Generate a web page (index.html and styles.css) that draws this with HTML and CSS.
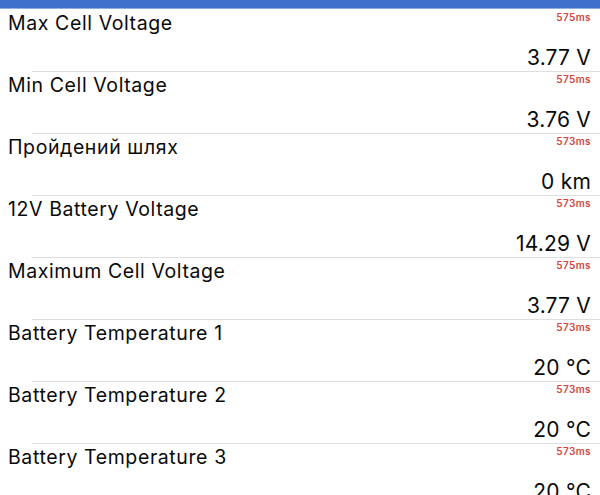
FILE: index.html
```html
<!DOCTYPE html>
<html lang="uk">
<head>
    <meta charset="UTF-8">
    <meta name="viewport" content="width=device-width, initial-scale=1.0">
    <title>Показники батареї</title>
    <link rel="stylesheet" href="styles.css">
</head>
<body>

    <!-- Верхня смуга -->
    <div class="top-bar"></div>

    <!-- Список показників -->
    <div class="list">
        <div class="row first">
            <div class="row-head">
                <span class="title">Max Cell Voltage</span>
                <span class="time">575ms</span>
            </div>
            <div class="value">3.77 V</div>
        </div>
        <div class="row">
            <div class="row-head">
                <span class="title">Min Cell Voltage</span>
                <span class="time">575ms</span>
            </div>
            <div class="value">3.76 V</div>
        </div>
        <div class="row">
            <div class="row-head">
                <span class="title">Пройдений шлях</span>
                <span class="time">573ms</span>
            </div>
            <div class="value">0 km</div>
        </div>
        <div class="row">
            <div class="row-head">
                <span class="title">12V Battery Voltage</span>
                <span class="time">573ms</span>
            </div>
            <div class="value">14.29 V</div>
        </div>
        <div class="row">
            <div class="row-head">
                <span class="title">Maximum Cell Voltage</span>
                <span class="time">575ms</span>
            </div>
            <div class="value">3.77 V</div>
        </div>
        <div class="row">
            <div class="row-head">
                <span class="title">Battery Temperature 1</span>
                <span class="time">573ms</span>
            </div>
            <div class="value">20 °C</div>
        </div>
        <div class="row">
            <div class="row-head">
                <span class="title">Battery Temperature 2</span>
                <span class="time">573ms</span>
            </div>
            <div class="value">20 °C</div>
        </div>
        <div class="row">
            <div class="row-head">
                <span class="title">Battery Temperature 3</span>
                <span class="time">573ms</span>
            </div>
            <div class="value">20 °C</div>
        </div>
    </div>

</body>
</html>
```

FILE: styles.css
```css
body {
    font-family: Inter, "Liberation Sans", sans-serif;
    margin: 0;
    padding: 0;
    background-color: #fff;
    color: #0a0a0a;
    height: 495px;
    overflow: hidden;
}

/* Смуга зверху */
.top-bar {
    height: 9px;
    background-color: #3d71cb;
    border-bottom: 1px solid #8eaee3;
    box-sizing: border-box;
}

/* Рядок списку */
.row {
    height: 62px;
    box-sizing: border-box;
    padding: 3px 9px 0 8px;
    /* лінія-роздільник з відступом зліва */
    background: linear-gradient(#dedede, #dedede) 32px 0 / 100% 1px no-repeat;
}

.row.first {
    background: none;
}

.row-head {
    display: flex;
    justify-content: space-between;
    align-items: flex-start;
}

.title {
    font-size: 19.5px;
    line-height: 22px;
    letter-spacing: 0.6px;
}

.time {
    font-size: 10px;
    line-height: 12px;
    font-weight: 600;
    color: #d2463f;
    letter-spacing: 0.4px;
    margin-top: -1px;
}

.value {
    text-align: right;
    font-size: 21px;
    line-height: 24px;
    letter-spacing: 0.2px;
    margin-top: 12px;
}
```
